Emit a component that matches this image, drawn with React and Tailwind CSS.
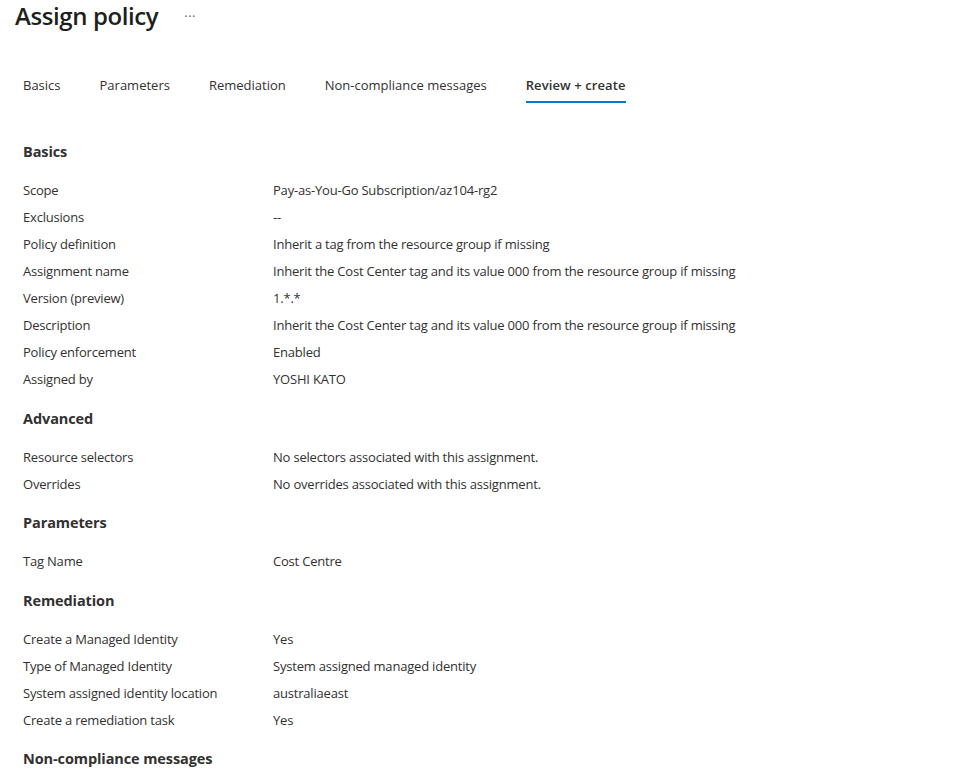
import React from "react";

const sections = [
  {
    title: "Basics",
    rows: [
      ["Scope", "Pay-as-You-Go Subscription/az104-rg2"],
      ["Exclusions", "--"],
      ["Policy definition", "Inherit a tag from the resource group if missing"],
      ["Assignment name", "Inherit the Cost Center tag and its value 000 from the resource group if missing"],
      ["Version (preview)", "1.*.*"],
      ["Description", "Inherit the Cost Center tag and its value 000 from the resource group if missing"],
      ["Policy enforcement", "Enabled"],
      ["Assigned by", "YOSHI KATO"],
    ],
  },
  {
    title: "Advanced",
    rows: [
      ["Resource selectors", "No selectors associated with this assignment."],
      ["Overrides", "No overrides associated with this assignment."],
    ],
  },
  {
    title: "Parameters",
    rows: [["Tag Name", "Cost Centre"]],
  },
  {
    title: "Remediation",
    rows: [
      ["Create a Managed Identity", "Yes"],
      ["Type of Managed Identity", "System assigned managed identity"],
      ["System assigned identity location", "australiaeast"],
      ["Create a remediation task", "Yes"],
    ],
  },
  { title: "Non-compliance messages", rows: [] },
];

const tabs = ["Basics", "Parameters", "Remediation", "Non-compliance messages", "Review + create"];

export default function App() {
  return (
    <div
      className="w-[955px] h-[770px] overflow-hidden bg-white text-[#323130]"
      style={{ fontFamily: '"Open Sans", "Noto Sans", sans-serif' }}
    >
      <div className="h-[32px] flex items-center pl-[15px]">
        <span className="text-[24px] font-semibold leading-[32px] text-[#201f1e] tracking-[-0.4px]">Assign policy</span>
        <span className="ml-[26px] text-[13px] text-[#605e5c] leading-none tracking-[0.5px]">···</span>
      </div>
      <div className="mt-[43px] flex gap-[39px] pl-[23px]">
        {tabs.map((t, i) => (
          <div
            key={t}
            className={
              "text-[13px] leading-[20px] pb-[6px] border-b-2 " +
              (i === tabs.length - 1 ? "border-[#0078d4] font-semibold text-[#323130] tracking-[0.1px]" : "border-transparent text-[#323130]")
            }
          >
            {t}
          </div>
        ))}
      </div>
      <div className="pl-[23px] pt-[37px]">
        {sections.map((s, si) => (
          <div key={s.title} className={si === 0 ? "" : "mt-[13px]"}>
            <div className="text-[14.5px] font-bold leading-[24px] tracking-[-0.1px]">{s.title}</div>
            {s.rows.length > 0 && (
              <div className="pt-[13.5px]">
                {s.rows.map(([k, v]) => (
                  <div key={k} className="flex h-[27px] items-center text-[13px] tracking-[-0.2px]">
                    <div className="w-[250px] shrink-0">{k}</div>
                    <div>{v}</div>
                  </div>
                ))}
              </div>
            )}
          </div>
        ))}
      </div>
    </div>
  );
}
